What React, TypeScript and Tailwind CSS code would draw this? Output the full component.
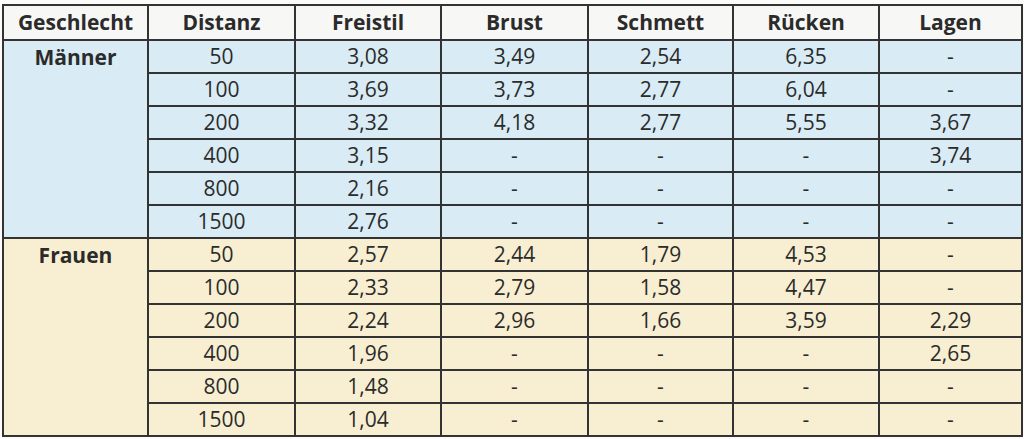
const header = ["Geschlecht", "Distanz", "Freistil", "Brust", "Schmett", "Rücken", "Lagen"];
const widths = ["w-[145px]", "w-[147px]", "w-[146px]", "w-[147px]", "w-[145px]", "w-[146px]", "w-[143px]"];

type Group = { label: string; bg: string; rows: string[][] };

const groups: Group[] = [
  {
    label: "Männer",
    bg: "bg-[#d9ebf4]",
    rows: [
      ["50", "3,08", "3,49", "2,54", "6,35", "-"],
      ["100", "3,69", "3,73", "2,77", "6,04", "-"],
      ["200", "3,32", "4,18", "2,77", "5,55", "3,67"],
      ["400", "3,15", "-", "-", "-", "3,74"],
      ["800", "2,16", "-", "-", "-", "-"],
      ["1500", "2,76", "-", "-", "-", "-"],
    ],
  },
  {
    label: "Frauen",
    bg: "bg-[#f8efd2]",
    rows: [
      ["50", "2,57", "2,44", "1,79", "4,53", "-"],
      ["100", "2,33", "2,79", "1,58", "4,47", "-"],
      ["200", "2,24", "2,96", "1,66", "3,59", "2,29"],
      ["400", "1,96", "-", "-", "-", "2,65"],
      ["800", "1,48", "-", "-", "-", "-"],
      ["1500", "1,04", "-", "-", "-", "-"],
    ],
  },
];

export default function App() {
  return (
    <div className="h-[439px] w-[1024px] bg-[#fbfbf9] pt-[4px] pl-[2px] font-['Open_Sans',sans-serif] text-[#2b2b2b]">
      <table className="table-fixed border-collapse">
        <thead>
          <tr className="h-[35px] bg-[#f7f7f5]">
            {header.map((h, i) => (
              <th
                key={h}
                className={`${widths[i]} border-2 border-[#333] p-0 text-center text-[21px] font-bold leading-none`}
              >
                {h}
              </th>
            ))}
          </tr>
        </thead>
        <tbody>
          {groups.map((g) =>
            g.rows.map((r, ri) => (
              <tr key={g.label + r[0]} className={`h-[33px] ${g.bg}`}>
                {ri === 0 && (
                  <td
                    rowSpan={g.rows.length}
                    className="border-2 border-[#333] p-0 pt-[6px] text-center align-top text-[21px] leading-none font-bold"
                  >
                    {g.label}
                  </td>
                )}
                {r.map((c, ci) => (
                  <td
                    key={ci}
                    className="border-2 border-[#333] p-0 text-center text-[21px] font-medium leading-none"
                  >
                    {c}
                  </td>
                ))}
              </tr>
            ))
          )}
        </tbody>
      </table>
    </div>
  );
}
